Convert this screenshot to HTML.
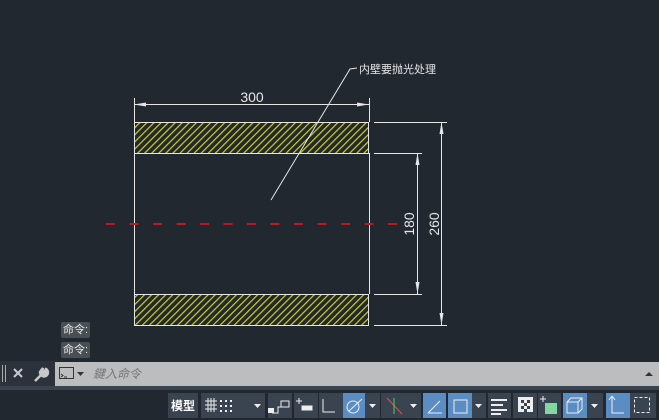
<!DOCTYPE html>
<html><head><meta charset="utf-8"><style>
body{margin:0;width:659px;height:420px;overflow:hidden;background:#212830;font-family:"Liberation Sans","Noto Sans CJK SC",sans-serif;position:relative}
.a{position:absolute}
.btn{position:absolute;top:393px;height:25px;background:#3a4350}
.blue{background:#5a8dc4}
.lbl{position:absolute;background:#4a4f55;color:#e8e8e8;font-size:11px;height:16px;line-height:16px;padding:0 2px;border-radius:2px}
</style></head><body>
<svg class="a" style="left:0;top:0" width="659" height="420">
<defs><pattern id="h" width="5" height="5" patternUnits="userSpaceOnUse" patternTransform="rotate(45)"><rect width="5" height="5" fill="#212830"/><rect x="0" y="0" width="1.2" height="5" fill="#d0d020"/></pattern></defs>
<rect x="134.5" y="122.5" width="234" height="31" fill="url(#h)" stroke="#e6e6e6"/>
<rect x="134.5" y="294.5" width="234" height="31" fill="url(#h)" stroke="#e6e6e6"/>
<g stroke="#e6e6e6" stroke-width="1" fill="none">
<line x1="134.5" y1="153" x2="134.5" y2="294"/>
<line x1="369.5" y1="153" x2="369.5" y2="294"/>
<line x1="134.5" y1="98" x2="134.5" y2="122"/>
<line x1="369.5" y1="98" x2="369.5" y2="122"/>
<line x1="134" y1="104.5" x2="369" y2="104.5"/>
<line x1="374" y1="122.5" x2="447" y2="122.5"/>
<line x1="374" y1="325.5" x2="447" y2="325.5"/>
<line x1="441.5" y1="122" x2="441.5" y2="325"/>
<line x1="374" y1="153.5" x2="422" y2="153.5"/>
<line x1="374" y1="294.5" x2="422" y2="294.5"/>
<line x1="417.5" y1="153" x2="417.5" y2="294"/>
<polyline points="271,200 350,69 357,68"/>
</g>
<g fill="#e6e6e6">
<polygon points="134,104.5 146,102.5 146,106.5"/><polygon points="369,104.5 357,102.5 357,106.5"/>
<polygon points="441.5,122 439.5,134 443.5,134"/><polygon points="441.5,325 439.5,313 443.5,313"/>
<polygon points="417.5,153 415.5,165 419.5,165"/><polygon points="417.5,294 415.5,282 419.5,282"/>
</g>
<line x1="106" y1="224" x2="400" y2="224" stroke="#c0161c" stroke-width="2" stroke-dasharray="9 14.5"/>
<text x="252" y="102" font-size="14" fill="#e6e6e6" text-anchor="middle" font-family="Liberation Sans">300</text>
<text transform="translate(414,224) rotate(-90)" font-size="14" fill="#e6e6e6" text-anchor="middle" font-family="Liberation Sans">180</text>
<text transform="translate(439,224) rotate(-90)" font-size="14" fill="#e6e6e6" text-anchor="middle" font-family="Liberation Sans">260</text>
<text x="359" y="73" font-size="11" fill="#e6e6e6" font-family="Noto Sans CJK SC">内壁要抛光处理</text>
<!-- command bar -->
<rect x="0" y="361" width="55" height="26" fill="#2b323c"/>
<g fill="#aaa"><rect x="2" y="365" width="1" height="17"/><rect x="5" y="365" width="1" height="17"/></g>
<g stroke="#c8c8c8" stroke-width="2"><line x1="14" y1="369" x2="22" y2="377"/><line x1="22" y1="369" x2="14" y2="377"/></g>
<path d="M35,381 L42,374 M40,372 a4,4 0 1 0 6,-3 l-2,3 -2,-1 1,-3 z" stroke="#c8c8c8" stroke-width="2.5" fill="#c8c8c8"/>
<rect x="55" y="362" width="604" height="24" fill="#bcbdbf"/>
<rect x="59.5" y="367.5" width="14" height="11" fill="none" stroke="#333"/>
<path d="M61,374 l2,1.5 -2,1.5 M64,377 h3" stroke="#333" fill="none"/>
<polygon points="77,372 84,372 80.5,376" fill="#333"/>
<polygon points="645,376 653,376 649,372" fill="#333"/>
<rect x="0" y="386" width="659" height="4" fill="#3a4350"/>
<!-- status bar -->
<g fill="#3a4350">
<rect x="168" y="393" width="30" height="25"/><rect x="201" y="393" width="64" height="25"/>
<rect x="268" y="393" width="24" height="25"/><rect x="294" y="393" width="24" height="25"/>
<rect x="319" y="393" width="24" height="25"/><rect x="365" y="393" width="15" height="25"/>
<rect x="381" y="393" width="40" height="25"/><rect x="472" y="393" width="14" height="25"/>
<rect x="488" y="393" width="23" height="25"/><rect x="513" y="393" width="24" height="25"/>
<rect x="538" y="393" width="23" height="25"/><rect x="587" y="393" width="16" height="25"/>
<rect x="630" y="393" width="26" height="25"/>
</g>
<g fill="#5a8dc4"><rect x="343" y="393" width="22" height="25"/><rect x="423" y="393" width="23" height="25"/><rect x="448" y="393" width="24" height="25"/><rect x="563" y="393" width="24" height="25"/><rect x="606" y="393" width="24" height="25"/></g>
<text x="171" y="410" font-size="12" font-weight="bold" fill="#fff" font-family="Noto Sans CJK SC">模型</text>
<g stroke="#eee" stroke-width="1" fill="none">
<path d="M205,401h12M205,405h12M205,409h12M208,398v14M211,398v14M214,398v14"/>
<path d="M272,413h6v-6h3v-6h8v6h-8"/>
<path d="M299,398v6M296,401h6"/><rect x="302" y="406" width="10" height="4" fill="#eee"/>
<path d="M323,399v13h12"/>
<circle cx="353" cy="407" r="6"/><path d="M349,411 L362,399"/>
<path d="M387,398 L402,414" stroke="#e05050"/><path d="M394,398 v16" stroke="#50d050"/>
<path d="M428,413 L440,401 M428,413 h14"/>
<rect x="454" y="400" width="13" height="13"/>
<path d="M491,400h16M491,405h12M491,410h16M491,414h10" stroke-width="2"/>
<path d="M540,399h6M543,396v6"/>
<rect x="567" y="402" width="11" height="11"/><path d="M567,402l4,-4h11v11l-4,4M578,402l4,-4"/>
<path d="M612,396v17h12M612,396l-3,4M612,396l3,4"/>
<rect x="634.5" y="397.5" width="15" height="15" stroke-dasharray="3 2"/>
</g>
<g fill="#eee">
<rect x="220" y="400" width="2" height="2"/><rect x="225" y="400" width="2" height="2"/><rect x="230" y="400" width="2" height="2"/>
<rect x="220" y="405" width="2" height="2"/><rect x="225" y="405" width="2" height="2"/><rect x="230" y="405" width="2" height="2"/>
<rect x="220" y="410" width="2" height="2"/><rect x="225" y="410" width="2" height="2"/><rect x="230" y="410" width="2" height="2"/>
<rect x="268" y="408" width="6" height="5"/>
<polygon points="254,404 261,404 257.5,408"/><polygon points="369,404 376,404 372.5,408"/><polygon points="410,404 417,404 413.5,408"/><polygon points="475,404 482,404 478.5,408"/><polygon points="591,404 598,404 594.5,408"/>
</g>
<rect x="518" y="397" width="15" height="15" fill="#eee"/>
<g fill="#3a4350"><rect x="521" y="400" width="3" height="3"/><rect x="527" y="400" width="3" height="3"/><rect x="524" y="403" width="3" height="3"/><rect x="521" y="406" width="3" height="3"/><rect x="527" y="406" width="3" height="3"/><rect x="524" y="409" width="3" height="3"/></g>
<rect x="545" y="403" width="12" height="11" fill="#80d8a0"/>
</svg>
<div class="lbl" style="left:61px;top:322px">命令:</div>
<div class="lbl" style="left:61px;top:342px">命令:</div>
<div class="a" style="left:93px;top:365px;color:#777;font-size:12px;font-style:italic">鍵入命令</div>
</body></html>
